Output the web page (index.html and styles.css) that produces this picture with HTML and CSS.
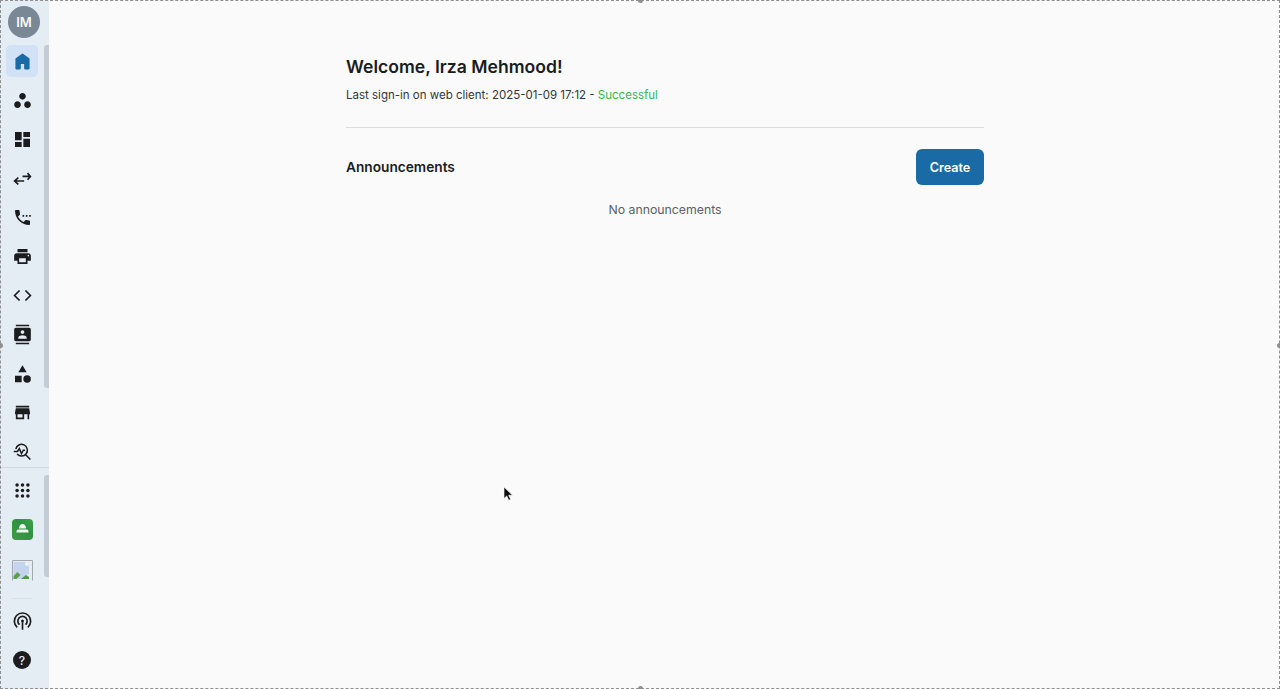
FILE: index.html
```html
<!DOCTYPE html>
<html lang="en">
<head>
<meta charset="utf-8">
<title>Home</title>
<link rel="stylesheet" href="styles.css">
</head>
<body>
<div class="app">
  <aside class="sidebar">
    <div class="avatar">IM</div>
    <nav class="group group-top">
      <a class="item active"><svg viewBox="0 0 24 24" class="icon home"><path d="M12 3.500l7.500 5.500v11.500h-4.500v-6.500h-6v6.500H4.500V9z"/></svg></a>
      <a class="item"><svg viewBox="0 0 24 24" class="icon"><path d="M6 13c-2.200 0-4 1.800-4 4s1.800 4 4 4 4-1.800 4-4-1.800-4-4-4zm12 0c-2.200 0-4 1.800-4 4s1.800 4 4 4 4-1.800 4-4-1.800-4-4-4zm-6-10C9.800 3 8 4.800 8 7s1.800 4 4 4 4-1.800 4-4-1.800-4-4-4z"/></svg></a>
      <a class="item"><svg viewBox="0 0 24 24" class="icon"><path d="M3 13h8V3H3v10zm0 8h8v-6H3v6zm10 0h8V11h-8v10zm0-18v6h8V3h-8z"/></svg></a>
      <a class="item"><svg viewBox="0 0 24 24" class="icon stroke"><path d="M12 9.500h9.500M18 5.500l3.500 4-3.500 4M14 15H2.500M7 11l-4.500 4 4.500 4"/></svg></a>
      <a class="item"><svg viewBox="0 0 24 24" class="icon"><path d="M6.620 10.790c1.440 2.830 3.760 5.140 6.590 6.590l2.200-2.200c.270-.270.670-.360 1.020-.240 1.120.370 2.330.570 3.570.570.550 0 1 .450 1 1V20c0 .550-.450 1-1 1-9.390 0-17-7.610-17-17 0-.550.450-1 1-1h3.500c.550 0 1 .450 1 1 0 1.250.200 2.450.570 3.570.110.350.030.740-.250 1.020l-2.200 2.200z"/><path d="M12 9h2v2h-2zM16 9h2v2h-2zM20 9h2v2h-2z"/></svg></a>
      <a class="item"><svg viewBox="0 0 24 24" class="icon"><path d="M19 8H5c-1.660 0-3 1.340-3 3v6h4v4h12v-4h4v-6c0-1.660-1.340-3-3-3zm-3 11H8v-5h8v5zm3-7c-.550 0-1-.450-1-1s.450-1 1-1 1 .450 1 1-.450 1-1 1zm-1-9H6v4h12V3z"/></svg></a>
      <a class="item"><svg viewBox="0 0 24 24" class="icon stroke"><path d="M8.500 6l-6 6 6 6M15.500 6l6 6-6 6"/></svg></a>
      <a class="item"><svg viewBox="0 0 24 24" class="icon"><path d="M20 0H4v2h16V0zM4 24h16v-2H4v2zM20 4H4c-1.100 0-2 .900-2 2v12c0 1.100.900 2 2 2h16c1.100 0 2-.900 2-2V6c0-1.100-.900-2-2-2zm-8 2.750c1.240 0 2.250 1.010 2.250 2.250s-1.010 2.250-2.250 2.250S9.750 10.240 9.750 9 10.760 6.750 12 6.750zM17 17H7v-1.500c0-1.670 3.330-2.500 5-2.500s5 .830 5 2.500V17z"/></svg></a>
      <a class="item"><svg viewBox="0 0 24 24" class="icon icon-low"><path d="M12 1.500l5 8.500H7zM3 14h8v8H3z"/><circle cx="17.500" cy="18" r="4.500"/></svg></a>
      <a class="item"><svg viewBox="0 0 24 24" class="icon"><path d="M20 4H4v2h16V4zm1 10v-2l-1-5H4l-1 5v2h1v6h10v-6h4v6h2v-6h1zm-9 4H6v-4h6v4z"/></svg></a>
      <a class="item"><svg viewBox="0 0 24 24" class="icon thin"><path d="M4 9a7 7 0 1 1 1.500 6M15.500 15.500L21.500 21.500M1.500 12H6l2.200-3.500 2.600 6 2.200-4h2"/></svg></a>
    </nav>
    <div class="divider"></div>
    <nav class="group group-bottom">
      <a class="item"><svg viewBox="0 0 24 24" class="icon"><circle cx="5.500" cy="5.500" r="2.100"/><circle cx="12" cy="5.500" r="2.100"/><circle cx="18.500" cy="5.500" r="2.100"/><circle cx="5.500" cy="12" r="2.100"/><circle cx="12" cy="12" r="2.100"/><circle cx="18.500" cy="12" r="2.100"/><circle cx="5.500" cy="18.500" r="2.100"/><circle cx="12" cy="18.500" r="2.100"/><circle cx="18.500" cy="18.500" r="2.100"/></svg></a>
      <a class="item"><span class="app-tile"><svg viewBox="0 0 21 21" class="app-glyph"><path d="M7 9.500c0-3 1.500-4.500 3.500-4.500S14 6.500 14 9.500z"/><path d="M4.500 12.500c0-1.500 1-2 2-2h8c1 0 2 .500 2 2v1h-12z"/></svg></span></a>
      <a class="item"><svg viewBox="0 0 21 21" class="broken"><path class="broken-frame" d="M.5 20.500V.5h20v20"/><path class="broken-sky" d="M1.500 2h12l3.500 3.500V14l-4 2-3 3H1.500z"/><path class="broken-hill" d="M1.500 19v-3l4-4 3 3-4 4z"/><path class="broken-leaf" d="M9 19l5-4 3 2v2z"/><path class="broken-fold" d="M13.500 2v3.500H17z"/></svg></a>
    </nav>
    <div class="short-rule"></div>
    <nav class="group group-foot">
      <a class="item"><svg viewBox="0 0 24 24" class="icon ring"><path d="M5.600 19A9.800 9.800 0 1 1 18.400 19M8.400 15.800a5.600 5.600 0 1 1 7.200 0M12 13v9"/><circle class="dot" cx="12" cy="11.500" r="1.800"/></svg></a>
      <a class="item"><span class="help">?</span></a>
    </nav>
    <span class="scrollbar scrollbar-top"></span>
    <span class="scrollbar scrollbar-bottom"></span>
  </aside>
  <main class="main">
    <div class="content">
      <header class="welcome">
        <h1 class="title">Welcome, Irza Mehmood!</h1>
        <p class="signin">Last sign-in on web client: 2025-01-09 17:12 - <span class="success">Successful</span></p>
      </header>
      <section class="announcements">
        <div class="ann-head">
          <h2 class="ann-title">Announcements</h2>
          <button class="create">Create</button>
        </div>
        <p class="empty">No announcements</p>
      </section>
    </div>
  </main>
</div>
<div class="frame">
  <i class="handle h-top"></i><i class="handle h-left"></i><i class="handle h-right"></i><i class="handle h-bottom"></i>
</div>
<svg class="cursor" viewBox="0 0 12 16"><path d="M1 1v11.500l2.800-2.600 1.900 4.300 1.900-.8-1.900-4.200H9.500z"/></svg>
</body>
</html>
```
FILE: styles.css
```css
* { box-sizing: border-box; }
html, body { margin: 0; height: 100%; overflow: hidden; }
body { font-family: Inter, "Liberation Sans", sans-serif; background: #fafafa; color: #1a1c1e; }

.app { display: flex; height: 689px; }

.sidebar { position: relative; flex: 0 0 49px; width: 49px; background: #e4ecf4; display: flex; flex-direction: column; }
.avatar { width: 32px; height: 32px; margin: 6px 0 0 8px; border-radius: 50%; background: #7a8794; color: #f6f8fa; font-size: 13px; font-weight: 600; display: flex; align-items: center; justify-content: center; }
.group { display: flex; flex-direction: column; gap: 7px; }
.group-top { padding-top: 7px; }
.group-bottom { padding-top: 6px; }
.group-foot { padding-top: 6px; }
.item { width: 32px; height: 32px; margin-left: 6px; display: flex; align-items: center; justify-content: center; border-radius: 5px; }
.item.active { background: #d2e2f6; }
.item.active .icon { fill: #1a6ba5; }
.icon { width: 20px; height: 20px; fill: #1a1c1e; transform: translate(.5px, .5px); }
.icon.home { stroke: #1a6ba5; stroke-width: 2; stroke-linejoin: round; }
.icon-low { transform: translate(.5px, 1px); }
.icon.stroke { fill: none; stroke: #1a1c1e; stroke-width: 2; }
.icon.thin { fill: none; stroke: #1a1c1e; stroke-width: 1.800; }
.icon.ring { fill: none; stroke: #1a1c1e; stroke-width: 2; }
.icon.ring .dot { fill: #1a1c1e; stroke: none; }
.divider { height: 1px; background: #d0d7de; }
.short-rule { width: 20px; height: 1px; margin: 14px 0 0 12px; background: #d8e0e8; }

.app-tile { width: 21px; height: 21px; border-radius: 4px; background: linear-gradient(45deg, #3f9a45, #2f9240 60%, #3ea24a); display: flex; align-items: center; justify-content: center; }
.app-glyph { width: 21px; height: 21px; fill: #eef6ee; }
.broken { width: 21px; height: 21px; transform: translateY(2px); }
.broken-frame { fill: none; stroke: #a3a8ad; }
.broken-sky { fill: #c4d3ee; }
.broken-hill { fill: #5d9e4e; }
.broken-leaf { fill: #4f9a3e; }
.broken-fold { fill: #fff; }
.help { width: 18px; height: 18px; border-radius: 50%; background: #1a1c1e; color: #e4ecf4; font-size: 12px; font-weight: 500; display: flex; align-items: center; justify-content: center; }

.scrollbar { position: absolute; left: 44px; width: 5px; background: #c3ccd5; border-radius: 3px 0 0 3px; }
.scrollbar-top { top: 45px; height: 343px; }
.scrollbar-bottom { top: 475px; height: 102px; }

.main { flex: 1; min-width: 0; }
.content { width: 638px; margin: 0 0 0 297px; padding-top: 56px; }
.welcome { padding-bottom: 25px; border-bottom: 1px solid #dcdcdc; }
.title { margin: 0; font-size: 17.600px; line-height: 22px; font-weight: 600; color: #1a1c1e; }
.signin { margin: 10px 0 0; font-size: 11.500px; line-height: 14px; color: #33363a; }
.success { color: #2fbb4f; }
.ann-head { display: flex; align-items: center; justify-content: space-between; margin-top: 21px; }
.ann-title { margin: 0; font-size: 13.700px; font-weight: 600; color: #1a1c1e; }
.create { width: 68px; height: 36px; border: 0; border-radius: 6px; background: #1a6ba5; color: #fff; font: 600 12.600px Inter, "Liberation Sans", sans-serif; }
.empty { margin: 17px 0 0; text-align: center; font-size: 12.300px; line-height: 15px; color: #5c5f63; }

.frame { position: absolute; inset: 0; border: 1px dashed #8d8f91; pointer-events: none; }
.handle { position: absolute; width: 5px; height: 5px; border-radius: 50%; background: #8d8f91; }
.h-top { top: -3px; left: 637px; }
.h-bottom { bottom: -3px; left: 637px; }
.h-left { left: -3px; top: 342px; }
.h-right { right: -3px; top: 342px; }

.cursor { position: absolute; left: 503px; top: 486px; width: 12px; height: 16px; fill: #111; stroke: #fff; stroke-width: .6; }
```
